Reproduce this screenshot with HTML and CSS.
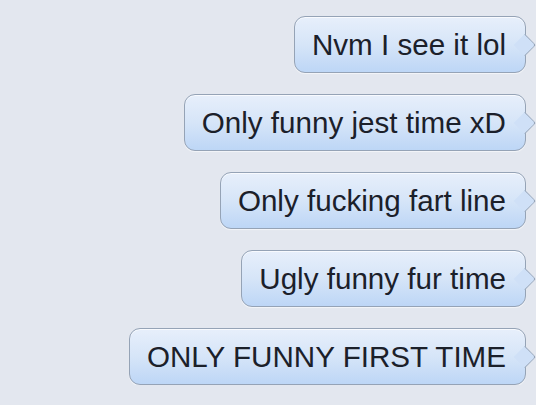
FILE: index.html
```html
<!DOCTYPE html>
<html>
<head>
<meta charset="utf-8">
<link rel="stylesheet" href="styles.css">
</head>
<body>
<div class="thread">
  <div class="bubble">Nvm I see it lol</div>
  <div class="bubble">Only funny jest time xD</div>
  <div class="bubble">Only fucking fart line</div>
  <div class="bubble">Ugly funny fur time</div>
  <div class="bubble">ONLY FUNNY FIRST TIME</div>
</div>
</body>
</html>
```
FILE: styles.css
```css
html, body {
  margin: 0;
  padding: 0;
  background: #e3e7ef;
  overflow: hidden;
}
.thread {
  display: flex;
  flex-direction: column;
  align-items: flex-end;
  gap: 21px;
  padding: 16px 10px 0 0;
}
.bubble {
  position: relative;
  box-sizing: border-box;
  height: 57px;
  display: flex;
  align-items: center;
  padding: 0 19px 0 17px;
  font-family: "Liberation Sans", Arial, sans-serif;
  font-size: 29.6px;
  color: #1b202a;
  white-space: nowrap;
  background: linear-gradient(to bottom, #e7effb 0%, #d6e5f8 50%, #bdd6f6 100%);
  border: 1px solid #95a3b6;
  border-radius: 11px;
  box-shadow: inset 0 1px 0 rgba(255,255,255,0.7), 0 1px 1px rgba(255,255,255,0.6);
}
.bubble::after {
  content: "";
  position: absolute;
  right: -8px;
  top: 50%;
  width: 15px;
  height: 15px;
  margin-top: -8px;
  background: #cfe0f7;
  border-top: 1px solid #95a3b6;
  border-right: 1px solid #95a3b6;
  transform: rotate(45deg);
  border-top-right-radius: 3px;
}
```
